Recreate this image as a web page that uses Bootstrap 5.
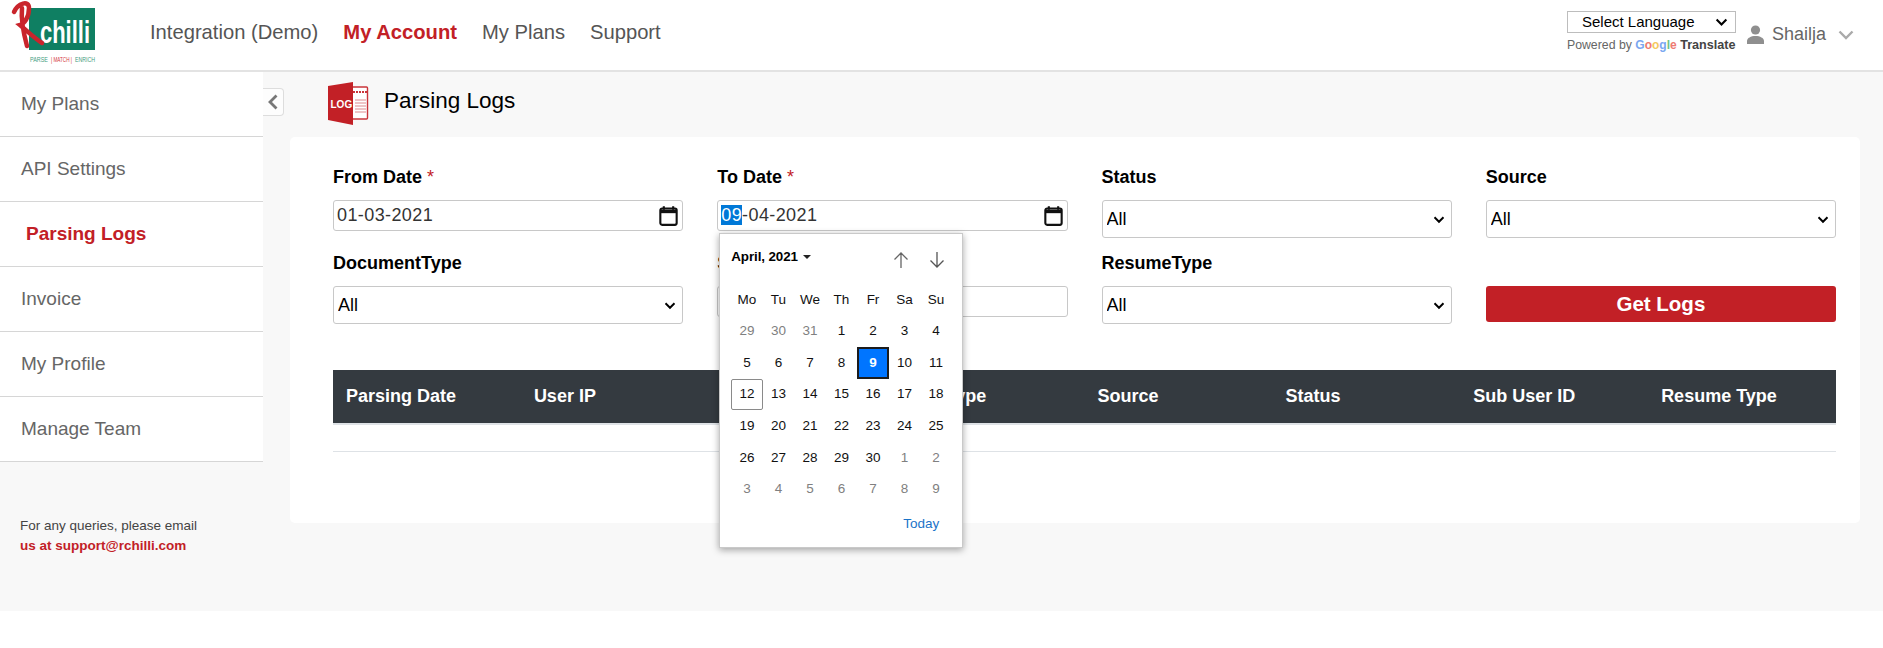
<!DOCTYPE html>
<html lang="en">
<head>
<meta charset="utf-8">
<title>Parsing Logs</title>
<link rel="stylesheet" href="https://cdn.jsdelivr.net/npm/bootstrap@5.3.0/dist/css/bootstrap.min.css">
<style>
html,body{background:#fff;font-family:"Liberation Sans",Arial,sans-serif;}
body{height:648px;overflow:hidden;}
.pg-shell{height:611px;background:#f8f8f8;}
.top-bar{height:72px;background:#fff;border-bottom:2px solid #e3e3e3;padding:0 29px 0 0;}
.logo-box{width:150px;height:70px;flex:none;}
.top-links{gap:25px;padding-bottom:6px;}
.top-links a{color:#555;font-size:20.2px;text-decoration:none;}
.top-links a.is-on{color:#c22026;font-weight:700;}
.top-right{align-self:flex-start;padding-top:11px;}
.lang-pick{width:169px;height:22px;padding:0 0 0 14px;border:1px solid #bdbdbd;border-radius:0;font-size:15px;color:#000;line-height:18px;background-image:url("data:image/svg+xml,%3csvg xmlns='http://www.w3.org/2000/svg' viewBox='0 0 16 12'%3e%3cpath fill='none' stroke='%23000' stroke-width='2.6' d='M2 3l6 6 6-6'/%3e%3c/svg%3e");background-position:right 7px center;background-size:13px 10px;}
.gt-line{font-size:12.3px;color:#666;margin-top:5px;white-space:nowrap;line-height:14px;width:169px;}
.gt-line b{font-size:12.6px;color:#444;}
.gt-g{font-size:12px;font-weight:700;}
.c-b{color:#7ba7f0}.c-r{color:#ee7a72}.c-y{color:#f5c85c}.c-g{color:#6fc285}
.user-box{margin-left:11px;margin-top:10px;}
.user-name{font-size:18px;color:#666;margin-left:8px;}
.user-caret{margin-left:12px;}
.side-col{width:263px;flex:none;}
.side-list{background:#fff;}
.side-item{display:flex;align-items:center;height:65px;padding-left:21px;font-size:19px;color:#666;text-decoration:none;border-bottom:1px solid #d6d6d6;}
.side-item.is-on{color:#c22026;font-weight:700;padding-left:26px;}
.side-note{padding:54px 0 0 20px;font-size:13.5px;line-height:20px;color:#444;}
.side-note b{color:#c22026;}
.main-col{flex:1;min-width:0;}
.title-row{height:65px;padding-bottom:6px;}
.coll-btn{width:21px;height:28px;background:#fdfdfd;border:1px solid #ddd;border-left:0;border-radius:0 4px 4px 0;}
.page-title{font-size:22.5px;color:#000;line-height:1;margin:0 0 0 15px;font-weight:400;}
.log-ic{margin:3px 0 0 44px;}
.panel-box{margin:0 23px 0 27px;height:386px;background:#fff;border-radius:5px;padding:28px 24px 0 43px;}
.flt-row{--bs-gutter-x:34px;}
.flt-label{display:block;font-size:18px;font-weight:700;line-height:24px;color:#000;margin-bottom:11px;}
.flt-label i{color:#c22026;font-style:normal;font-weight:400;}
.date-box{height:31px;border:1px solid #c8c8c8;border-radius:3px;background:#fff;display:flex;align-items:center;justify-content:space-between;padding:0 4px 0 3px;font-size:18px;color:#333;letter-spacing:.4px;}
.date-box em{font-style:normal;background:#0078d7;color:#fff;}
.date-blank{margin-top:8px;}
.flt-sel{height:38px;padding:0 0 0 4px;border:1px solid #c8c8c8;border-radius:3px;font-size:18px;color:#000;background-image:url("data:image/svg+xml,%3csvg xmlns='http://www.w3.org/2000/svg' viewBox='0 0 16 12'%3e%3cpath fill='none' stroke='%23000' stroke-width='2.6' d='M2 3l6 6 6-6'/%3e%3c/svg%3e");background-position:right 6px center;background-size:12px 9px;}
.flt-row + .flt-row{margin-top:13px;}
.get-btn{height:36px;width:100%;padding:0;background:#c22026;border:0;border-radius:3px;color:#fff;font-size:20.5px;font-weight:700;line-height:1;}
.get-btn:hover{background:#c22026;color:#fff;}
.gap-lab{height:35px;}
.log-table{table-layout:fixed;margin:46px 0 0;border-collapse:separate;border-spacing:0;}
.log-table th{background:#343a40;color:#fff;height:55px;padding:0 0 0 13px;font-size:18px;font-weight:700;vertical-align:middle;border-bottom:2px solid #dee2e6;}
.tbl-rule{height:27px;border-bottom:1px solid #dee2e6;}
.cal-pop{position:absolute;left:19px;top:68px;width:244px;height:315px;background:#fff;border:1px solid #c9c9c9;box-shadow:0 2px 7px rgba(0,0,0,.35);padding:0 0 0 11px;z-index:5;}
.cal-head{height:47px;padding-right:16px;}
.cal-month{font-size:13.4px;font-weight:700;color:#000;letter-spacing:-.1px;}
.cal-caret{display:inline-block;border-left:4px solid transparent;border-right:4px solid transparent;border-top:4px solid #222;margin-left:5px;vertical-align:2px;}
.cal-arrows{gap:18px;margin-top:5px;}
.cal-grid{display:grid;grid-template-columns:repeat(7,31.5px);grid-auto-rows:31.6px;margin-top:3px;}
.cal-grid span{display:flex;align-items:center;justify-content:center;font-size:13.5px;color:#111;}
.cal-grid .dim{color:#808080;}
.cal-grid .sel{background:#0075ff;color:#fff;font-weight:700;border:2px solid #1c1c1c;}
.cal-grid .now{border:1px solid #8a8a8a;border-radius:2px;}
.cal-today{font-size:13.5px;color:#1a73c8;text-align:right;padding-right:23px;margin-top:9px;}
</style>
</head>
<body>
<div class="pg-shell">
  <header class="top-bar d-flex align-items-center">
    <div class="logo-box">
      <svg width="150" height="70" viewBox="0 0 150 70" role="img" aria-label="RChilli logo">
        <rect x="29" y="8" width="66" height="42" fill="#0f7f62"/>
        <text x="40" y="43" font-family="Liberation Sans" font-weight="700" font-size="32" fill="#fff" textLength="50" lengthAdjust="spacingAndGlyphs">chilli</text>
        <path d="M22 8 C21 18 24 35 27 46 M14 12 C18 3 29 0 29 8 C29 18 24 24 20 25 C26 30 34 38 42 43" fill="none" stroke="#c9252c" stroke-width="4.500" stroke-linecap="round"/>
        <text x="30" y="62" font-family="Liberation Sans" font-size="6.500" fill="#3f9d80" textLength="18" lengthAdjust="spacingAndGlyphs">PARSE</text>
        <text x="51" y="62" font-family="Liberation Sans" font-size="6.500" fill="#d3343a" textLength="21" lengthAdjust="spacingAndGlyphs">| MATCH |</text>
        <text x="75" y="62" font-family="Liberation Sans" font-size="6.500" fill="#3f9d80" textLength="20" lengthAdjust="spacingAndGlyphs">ENRICH</text>
      </svg>
    </div>
    <nav class="top-links d-flex align-items-center">
      <a href="#">Integration (Demo)</a>
      <a href="#" class="is-on">My Account</a>
      <a href="#">My Plans</a>
      <a href="#">Support</a>
    </nav>
    <div class="ms-auto d-flex align-items-start top-right">
      <div>
        <select class="form-select lang-pick"><option>Select Language</option></select>
        <div class="gt-line">Powered by <span class="gt-g"><span class="c-b">G</span><span class="c-r">o</span><span class="c-y">o</span><span class="c-b">g</span><span class="c-g">l</span><span class="c-r">e</span></span> <b>Translate</b></div>
      </div>
      <div class="d-flex align-items-center user-box">
        <svg width="17" height="19" viewBox="0 0 17 19"><circle cx="8.500" cy="5" r="4.600" fill="#8f8f8f"/><path d="M0 19v-3c0-3 4-5 8.500-5s8.500 2 8.500 5v3z" fill="#8f8f8f"/></svg>
        <span class="user-name">Shailja</span>
        <svg class="user-caret" width="16" height="10" viewBox="0 0 16 10"><path d="M1.500 1.500 8 8l6.500-6.500" fill="none" stroke="#aaa" stroke-width="2.400"/></svg>
      </div>
    </div>
  </header>
  <div class="d-flex">
    <aside class="side-col">
      <div class="side-list">
        <a class="side-item" href="#">My Plans</a>
        <a class="side-item" href="#">API Settings</a>
        <a class="side-item is-on" href="#">Parsing Logs</a>
        <a class="side-item" href="#">Invoice</a>
        <a class="side-item" href="#">My Profile</a>
        <a class="side-item" href="#">Manage Team</a>
      </div>
      <div class="side-note">For any queries, please email<br><b>us at support@rchilli.com</b></div>
    </aside>
    <main class="main-col">
      <div class="title-row d-flex align-items-center">
        <div class="coll-btn d-flex align-items-center justify-content-center">
          <svg width="12" height="16" viewBox="0 0 12 16"><path d="M9.500 1.500 3 8l6.500 6.500" fill="none" stroke="#777" stroke-width="2.800"/></svg>
        </div>
        <svg class="log-ic" width="41" height="43" viewBox="0 0 41 43">
          <rect x="24" y="5" width="15.500" height="32" rx="1" fill="#fff" stroke="#c9343a" stroke-width="1.400"/>
          <path d="M25 10h14" stroke="#c9343a" stroke-width="2" stroke-dasharray="2 1"/>
          <path d="M27 18h11M27 21h11M27 24h11M27 27h11M27 30h11" stroke="#dd8a8d" stroke-width="1"/>
          <path d="M0 4 25 0v43L0 38z" fill="#c22026"/>
          <text x="2.500" y="26" font-family="Liberation Sans" font-weight="700" font-size="10" fill="#fff">LOG</text>
        </svg>
        <h1 class="page-title">Parsing Logs</h1>
      </div>
      <section class="panel-box">
        <div class="row flt-row">
          <div class="col-3">
            <label class="flt-label">From Date <i>*</i></label>
            <div class="date-box">01-03-2021
              <svg width="19" height="21" viewBox="0 0 16 18"><rect x="1" y="3" width="14" height="14" rx="1.500" fill="none" stroke="#111" stroke-width="1.800"/><path d="M1 5.500h14" stroke="#111" stroke-width="3"/><path d="M4 1v3M12 1v3" stroke="#111" stroke-width="1.800"/></svg>
            </div>
          </div>
          <div class="col-3 position-relative">
            <label class="flt-label">To Date <i>*</i></label>
            <div class="date-box"><span><em>09</em>-04-2021</span>
              <svg width="19" height="21" viewBox="0 0 16 18"><rect x="1" y="3" width="14" height="14" rx="1.500" fill="none" stroke="#111" stroke-width="1.800"/><path d="M1 5.500h14" stroke="#111" stroke-width="3"/><path d="M4 1v3M12 1v3" stroke="#111" stroke-width="1.800"/></svg>
            </div>
            <div class="cal-pop">
              <div class="cal-head d-flex align-items-center justify-content-between">
                <span class="cal-month">April, 2021<span class="cal-caret"></span></span>
                <span class="cal-arrows d-flex">
                  <svg width="18" height="18" viewBox="0 0 18 18"><path d="M9 17V2M2.500 8.500 9 2l6.500 6.500" fill="none" stroke="#666" stroke-width="1.300"/></svg>
                  <svg width="18" height="18" viewBox="0 0 18 18"><path d="M9 1v15M2.500 9.500 9 16l6.500-6.500" fill="none" stroke="#555" stroke-width="1.300"/></svg>
                </span>
              </div>
              <div class="cal-grid">
                <span>Mo</span><span>Tu</span><span>We</span><span>Th</span><span>Fr</span><span>Sa</span><span>Su</span>
                <span class="dim">29</span><span class="dim">30</span><span class="dim">31</span><span>1</span><span>2</span><span>3</span><span>4</span>
                <span>5</span><span>6</span><span>7</span><span>8</span><span class="sel">9</span><span>10</span><span>11</span>
                <span class="now">12</span><span>13</span><span>14</span><span>15</span><span>16</span><span>17</span><span>18</span>
                <span>19</span><span>20</span><span>21</span><span>22</span><span>23</span><span>24</span><span>25</span>
                <span>26</span><span>27</span><span>28</span><span>29</span><span>30</span><span class="dim">1</span><span class="dim">2</span>
                <span class="dim">3</span><span class="dim">4</span><span class="dim">5</span><span class="dim">6</span><span class="dim">7</span><span class="dim">8</span><span class="dim">9</span>
              </div>
              <div class="cal-today">Today</div>
            </div>
          </div>
          <div class="col-3">
            <label class="flt-label">Status</label>
            <select class="form-select flt-sel"><option>All</option></select>
          </div>
          <div class="col-3">
            <label class="flt-label">Source</label>
            <select class="form-select flt-sel"><option>All</option></select>
          </div>
        </div>
        <div class="row flt-row">
          <div class="col-3">
            <label class="flt-label">DocumentType</label>
            <select class="form-select flt-sel"><option>All</option></select>
          </div>
          <div class="col-3">
            <label class="flt-label">S</label>
            <div class="date-box date-blank"></div>
          </div>
          <div class="col-3">
            <label class="flt-label">ResumeType</label>
            <select class="form-select flt-sel"><option>All</option></select>
          </div>
          <div class="col-3">
            <div class="gap-lab"></div>
            <button class="btn get-btn" type="button">Get Logs</button>
          </div>
        </div>
        <table class="table log-table">
          <thead>
            <tr>
              <th>Parsing Date</th><th>User IP</th><th></th><th>File Type</th><th>Source</th><th>Status</th><th>Sub User ID</th><th>Resume Type</th>
            </tr>
          </thead>
        </table>
        <div class="tbl-rule"></div>
      </section>
    </main>
  </div>
</div>
<script src="https://cdn.jsdelivr.net/npm/bootstrap@5.3.0/dist/js/bootstrap.bundle.min.js"></script>
</body>
</html>
